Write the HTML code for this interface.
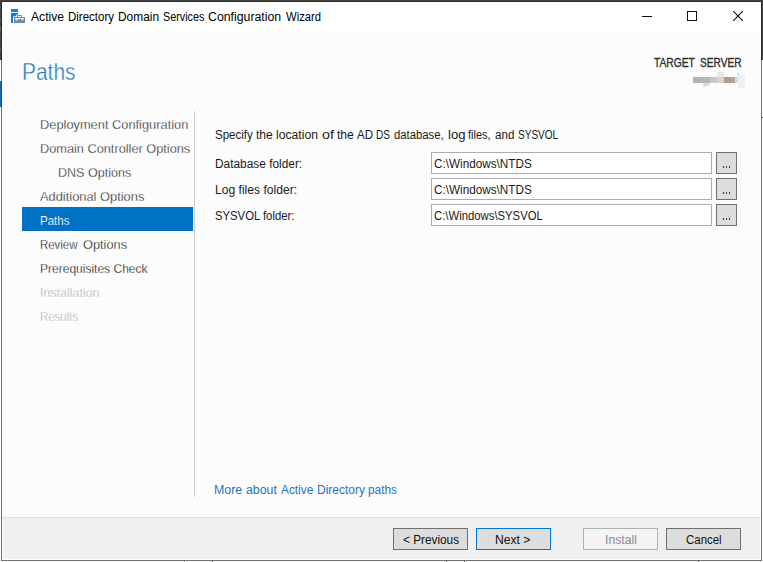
<!DOCTYPE html>
<html lang="en">
<head>
<meta charset="utf-8">
<title>Active Directory Domain Services Configuration Wizard</title>
<style>
html,body{margin:0;padding:0;}
body{width:763px;height:562px;overflow:hidden;background:#fff;font-family:"Liberation Sans",sans-serif;position:relative;}
.abs{position:absolute;}
.t{position:absolute;white-space:pre;transform-origin:0 0;font-family:"Liberation Sans",sans-serif;}
#win{left:0;top:0;width:763px;height:562px;background:#fff;}
#titlebar{left:2px;top:2px;width:759px;height:30px;background:#fff;}
#content{left:3px;top:32px;width:757px;height:484px;background:#fcfcfc;}
#footer{left:3px;top:518px;width:757px;height:41px;background:#f0f0f0;}
#footline{left:2px;top:517px;width:759px;height:1px;background:#dfdfdf;}
#sel{left:22px;top:207px;width:171px;height:24px;background:#0072c6;}
#vsep{left:194px;top:111px;width:1px;height:386px;background:#cdcdcd;}
.tb{position:absolute;left:431px;width:279px;height:20px;border:1px solid #abadb3;background:#fff;}
.bb{position:absolute;left:716px;width:19px;height:20px;border:1px solid #707070;background:#dddddd;}
.btn{position:absolute;top:528px;width:73px;height:20px;border:1px solid #707070;background:#dddddd;}
.dots i{position:absolute;width:1px;height:2px;background:#3a3a3a;}
</style>
</head>
<body>
<div id="win" class="abs">
  <div id="titlebar" class="abs"></div>
  <div id="content" class="abs"></div>
  <div id="footline" class="abs"></div>
  <div id="footer" class="abs"></div>

  <!-- outer frame -->
  <div class="abs" style="left:0;top:0;width:763px;height:1px;background:#444"></div>
  <div class="abs" style="left:1px;top:1px;width:761px;height:1px;background:#2a2a2a"></div>
  <div class="abs" style="left:0;top:0;width:1px;height:60px;background:#444"></div>
  <div class="abs" style="left:1px;top:1px;width:1px;height:59px;background:#2a2a2a"></div>
  <div class="abs" style="left:0;top:7px;width:1px;height:2px;background:#5c5c5c"></div>
  <div class="abs" style="left:0;top:19px;width:1px;height:2px;background:#5c5c5c"></div>
  <div class="abs" style="left:0;top:27px;width:1px;height:4px;background:#666"></div>
  <div class="abs" style="left:0;top:37px;width:1px;height:2px;background:#5c5c5c"></div>
  <div class="abs" style="left:0;top:48px;width:1px;height:3px;background:#5c5c5c"></div>
  <div class="abs" style="left:762px;top:0;width:1px;height:60px;background:#444"></div>
  <div class="abs" style="left:761px;top:1px;width:1px;height:59px;background:#2a2a2a"></div>
  <div class="abs" style="left:1px;top:60px;width:1px;height:501px;background:#707070"></div>
  <div class="abs" style="left:761px;top:60px;width:1px;height:501px;background:#707070"></div>
  <div class="abs" style="left:1px;top:560px;width:761px;height:1px;background:#707070"></div>
  <div class="abs" style="left:0;top:81px;width:1px;height:26px;background:#0a6cc0"></div>
  <div class="abs" style="left:1px;top:81px;width:1px;height:26px;background:#1d4e7d"></div>

  <!-- stray pixels of the window behind, visible on the outermost row/column -->
  <div class="abs" style="left:184px;top:561px;width:1px;height:1px;background:#8a8a8a"></div>
  <div class="abs" style="left:212px;top:561px;width:1px;height:1px;background:#555"></div>
  <div class="abs" style="left:446px;top:561px;width:1px;height:1px;background:#555"></div>
  <div class="abs" style="left:464px;top:561px;width:1px;height:1px;background:#555"></div>
  <div class="abs" style="left:698px;top:561px;width:1px;height:1px;background:#555"></div>
  <div class="abs" style="left:762px;top:117px;width:1px;height:1px;background:#555"></div>

  <!-- title icon -->
  <svg class="abs" style="left:6px;top:4px" width="24" height="24" viewBox="6 4 24 24" shape-rendering="crispEdges">
    <rect x="11" y="9" width="7" height="3" fill="#0d7edb"/>
    <rect x="12" y="10" width="5" height="1" fill="#2b8ce0"/>
    <path d="M11 13h7v1l-3 2.5h-2V23h-2z" fill="#0d7edb" shape-rendering="auto"/>
    <rect x="14" y="17" width="11" height="6" fill="#6f8da7"/>
    <path d="M17.5 17v-1.5h4V17" fill="none" stroke="#6f8da7" stroke-width="1" shape-rendering="auto"/>
    <path d="M15 18h9v.6l-1 1.6h-1.4l-.6-1.2h-3l-.6 1.2h-1.4l-1-1.6z" fill="#f2f5f8" shape-rendering="auto"/>
  </svg>

  <!-- window controls -->
  <div class="abs" style="left:642px;top:16px;width:10px;height:1px;background:#111"></div>
  <div class="abs" style="left:687px;top:11px;width:8px;height:8px;border:1px solid #111"></div>
  <svg class="abs" style="left:732px;top:10px" width="12" height="12" viewBox="0 0 12 12"><path d="M1.2 1.2L10.8 10.8M10.8 1.2L1.2 10.8" stroke="#111" stroke-width="1.15" fill="none"/></svg>

  <!-- blurred server name mosaic -->
  <div class="abs" style="left:693px;top:77px;width:3px;height:6px;background:#b8b2ae"></div>
  <div class="abs" style="left:696px;top:77px;width:7px;height:6px;background:#b3b3b3"></div>
  <div class="abs" style="left:703px;top:77px;width:7px;height:6px;background:#b8b6b2"></div>
  <svg class="abs" style="left:703px;top:83px" width="8" height="5" viewBox="0 0 8 5"><path d="M0 0h7v1.6L0.5 4.6z" fill="#dbd7d5"/></svg>
  <div class="abs" style="left:724px;top:84px;width:7px;height:1px;background:#ecebe9"></div>
  <div class="abs" style="left:710px;top:77px;width:7px;height:6px;background:#c3c7ce"></div>
  <div class="abs" style="left:717px;top:72px;width:7px;height:5px;background:#e6e8e8"></div>
  <div class="abs" style="left:717px;top:77px;width:7px;height:6px;background:#dbd3cf"></div>
  <div class="abs" style="left:724px;top:77px;width:7px;height:6px;background:#a89e94"></div>
  <div class="abs" style="left:731px;top:77px;width:4px;height:6px;background:#b0a69c"></div>
  <div class="abs" style="left:735px;top:77px;width:3px;height:6px;background:#dedad6"></div>
  <div class="abs" style="left:738px;top:75px;width:7px;height:13px;background:#e9eff7;border-radius:0 0 1px 1px"></div>
  <div class="abs" style="left:738px;top:73px;width:1px;height:2px;background:#9cc3e8"></div>

  <!-- sidebar -->
  <div id="sel" class="abs"></div>
  <div id="vsep" class="abs"></div>

  <!-- form -->
  <div class="tb" style="top:152px"></div>
  <div class="tb" style="top:178px"></div>
  <div class="tb" style="top:204px"></div>
  <div class="bb dots" style="top:152px"><i style="left:6px;top:13px"></i><i style="left:9px;top:13px"></i><i style="left:12px;top:13px"></i></div>
  <div class="bb dots" style="top:178px"><i style="left:6px;top:13px"></i><i style="left:9px;top:13px"></i><i style="left:12px;top:13px"></i></div>
  <div class="bb dots" style="top:204px"><i style="left:6px;top:13px"></i><i style="left:9px;top:13px"></i><i style="left:12px;top:13px"></i></div>

  <!-- footer buttons -->
  <div class="btn" style="left:393px"></div>
  <div class="btn" style="left:476px;border-color:#0078d7"></div>
  <div class="btn" style="left:583px;border-color:#adb2b5;background:#f4f4f4"></div>
  <div class="btn" style="left:666px"></div>

  <!-- text -->
  <span class="t" style="left:30.96px;top:8.84px;font-size:12px;line-height:16px;color:#000;transform:scaleX(1.0113);">Active</span>
  <span class="t" style="left:68.23px;top:8.84px;font-size:12px;line-height:16px;color:#000;transform:scaleX(0.9586);">Directory</span>
  <span class="t" style="left:118.20px;top:8.84px;font-size:12px;line-height:16px;color:#000;transform:scaleX(0.9936);">Domain</span>
  <span class="t" style="left:163.08px;top:8.84px;font-size:12px;line-height:16px;color:#000;transform:scaleX(0.8987);">Services</span>
  <span class="t" style="left:208.40px;top:8.84px;font-size:12px;line-height:16px;color:#000;transform:scaleX(1.0246);">Configuration</span>
  <span class="t" style="left:285.61px;top:8.84px;font-size:12px;line-height:16px;color:#000;transform:scaleX(0.9383);">Wizard</span>
  <span class="t" style="left:21.86px;top:58.08px;font-size:24px;line-height:28px;color:#2174b0;transform:scaleX(0.8716);-webkit-text-stroke:0.42px #fcfcfc;">Paths</span>
  <span class="t" style="left:653.96px;top:55.24px;font-size:12px;line-height:16px;color:#2b2b2b;transform:scaleX(0.8560);-webkit-text-stroke:0.3px #2b2b2b;">TARGET</span>
  <span class="t" style="left:699.65px;top:55.24px;font-size:12px;line-height:16px;color:#2b2b2b;transform:scaleX(0.8451);-webkit-text-stroke:0.3px #2b2b2b;">SERVER</span>
  <span class="t" style="left:39.98px;top:116.00px;font-size:13px;line-height:17px;color:#242424;transform:scaleX(0.9868);-webkit-text-stroke:0.26px #fcfcfc;">Deployment Configuration</span>
  <span class="t" style="left:39.99px;top:140.00px;font-size:13px;line-height:17px;color:#242424;transform:scaleX(0.9807);-webkit-text-stroke:0.26px #fcfcfc;">Domain Controller Options</span>
  <span class="t" style="left:57.70px;top:164.00px;font-size:13px;line-height:17px;color:#242424;transform:scaleX(0.9646);-webkit-text-stroke:0.26px #fcfcfc;">DNS Options</span>
  <span class="t" style="left:39.90px;top:188.00px;font-size:13px;line-height:17px;color:#242424;transform:scaleX(0.9888);-webkit-text-stroke:0.26px #fcfcfc;">Additional Options</span>
  <span class="t" style="left:39.81px;top:212.00px;font-size:13px;line-height:17px;color:#fff;transform:scaleX(0.8875);-webkit-text-stroke:0.18px #0072c6;">Paths</span>
  <span class="t" style="left:40.08px;top:236.00px;font-size:13px;line-height:17px;color:#0c0c0c;transform:scaleX(0.8789);-webkit-text-stroke:0.26px #fcfcfc;">Review</span>
  <span class="t" style="left:82.54px;top:236.00px;font-size:13px;line-height:17px;color:#0c0c0c;transform:scaleX(0.9836);-webkit-text-stroke:0.26px #fcfcfc;">Options</span>
  <span class="t" style="left:40.03px;top:260.00px;font-size:13px;line-height:17px;color:#0c0c0c;transform:scaleX(0.9243);-webkit-text-stroke:0.26px #fcfcfc;">Prerequisites Check</span>
  <span class="t" style="left:39.76px;top:284.00px;font-size:13px;line-height:17px;color:#b2b2b2;transform:scaleX(0.9560);-webkit-text-stroke:0.26px #fcfcfc;">Installation</span>
  <span class="t" style="left:40.08px;top:308.00px;font-size:13px;line-height:17px;color:#b2b2b2;transform:scaleX(0.8795);-webkit-text-stroke:0.26px #fcfcfc;">Results</span>
  <span class="t" style="left:214.84px;top:127.04px;font-size:12px;line-height:16px;color:#1a1a1a;transform:scaleX(0.9594);">Specify</span>
  <span class="t" style="left:256.18px;top:127.04px;font-size:12px;line-height:16px;color:#1a1a1a;transform:scaleX(1.0087);">the</span>
  <span class="t" style="left:276.13px;top:127.04px;font-size:12px;line-height:16px;color:#1a1a1a;transform:scaleX(1.0149);">location</span>
  <span class="t" style="left:321.74px;top:127.04px;font-size:12px;line-height:16px;color:#1a1a1a;transform:scaleX(1.1924);">of</span>
  <span class="t" style="left:336.58px;top:127.04px;font-size:12px;line-height:16px;color:#1a1a1a;transform:scaleX(1.0087);">the</span>
  <span class="t" style="left:357.07px;top:127.04px;font-size:12px;line-height:16px;color:#1a1a1a;transform:scaleX(0.9620);">AD</span>
  <span class="t" style="left:375.83px;top:127.04px;font-size:12px;line-height:16px;color:#1a1a1a;transform:scaleX(0.8365);">DS</span>
  <span class="t" style="left:394.12px;top:127.04px;font-size:12px;line-height:16px;color:#1a1a1a;transform:scaleX(0.9427);">database,</span>
  <span class="t" style="left:447.51px;top:127.04px;font-size:12px;line-height:16px;color:#1a1a1a;transform:scaleX(1.0898);">log</span>
  <span class="t" style="left:468.49px;top:127.04px;font-size:12px;line-height:16px;color:#1a1a1a;transform:scaleX(0.9098);">files,</span>
  <span class="t" style="left:494.99px;top:127.04px;font-size:12px;line-height:16px;color:#1a1a1a;transform:scaleX(0.9701);">and</span>
  <span class="t" style="left:518.43px;top:127.04px;font-size:12px;line-height:16px;color:#1a1a1a;transform:scaleX(0.8360);">SYSVOL</span>
  <span class="t" style="left:214.91px;top:155.54px;font-size:12px;line-height:16px;color:#1a1a1a;transform:scaleX(0.9898);">Database folder:</span>
  <span class="t" style="left:214.99px;top:181.54px;font-size:12px;line-height:16px;color:#1a1a1a;transform:scaleX(1.0078);">Log files folder:</span>
  <span class="t" style="left:215.05px;top:207.54px;font-size:12px;line-height:16px;color:#1a1a1a;transform:scaleX(0.9420);">SYSVOL folder:</span>
  <span class="t" style="left:433.82px;top:155.54px;font-size:12px;line-height:16px;color:#1a1a1a;transform:scaleX(0.9771);">C:\Windows\NTDS</span>
  <span class="t" style="left:433.82px;top:181.54px;font-size:12px;line-height:16px;color:#1a1a1a;transform:scaleX(0.9771);">C:\Windows\NTDS</span>
  <span class="t" style="left:433.84px;top:207.54px;font-size:12px;line-height:16px;color:#1a1a1a;transform:scaleX(0.9432);">C:\Windows\SYSVOL</span>
  <span class="t" style="left:214.47px;top:481.84px;font-size:12px;line-height:16px;color:#1f74c0;transform:scaleX(1.0316);">More</span>
  <span class="t" style="left:246.44px;top:481.84px;font-size:12px;line-height:16px;color:#1f74c0;transform:scaleX(1.0274);">about</span>
  <span class="t" style="left:281.19px;top:481.84px;font-size:12px;line-height:16px;color:#1f74c0;transform:scaleX(0.9855);">Active</span>
  <span class="t" style="left:316.70px;top:481.84px;font-size:12px;line-height:16px;color:#1f74c0;transform:scaleX(1.0006);">Directory</span>
  <span class="t" style="left:368.36px;top:481.84px;font-size:12px;line-height:16px;color:#1f74c0;transform:scaleX(0.9884);">paths</span>
  <span class="t" style="left:402.94px;top:531.54px;font-size:12px;line-height:16px;color:#111;transform:scaleX(0.9826);">&lt; Previous</span>
  <span class="t" style="left:494.99px;top:531.54px;font-size:12px;line-height:16px;color:#111;transform:scaleX(1.0130);">Next &gt;</span>
  <span class="t" style="left:604.54px;top:531.54px;font-size:12px;line-height:16px;color:#8a8a8a;transform:scaleX(1.0156);">Install</span>
  <span class="t" style="left:685.93px;top:531.54px;font-size:12px;line-height:16px;color:#111;transform:scaleX(0.9547);">Cancel</span>
</div>
</body>
</html>
